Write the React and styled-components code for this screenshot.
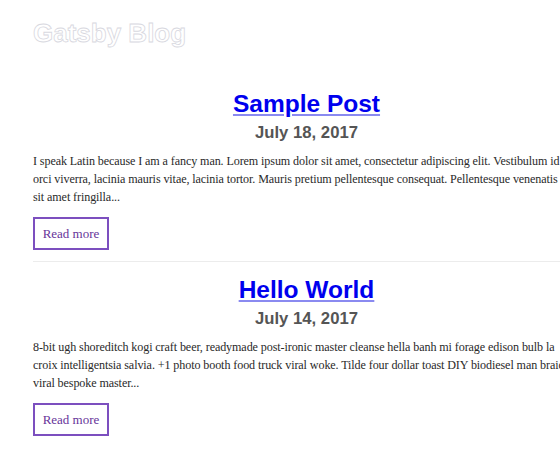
import React from "react";
import styled, { createGlobalStyle } from "styled-components";

const Global = createGlobalStyle`
  html, body { margin: 0; padding: 0; background: #fff; }
  body { font-family: "Liberation Serif", serif; overflow: hidden; }
`;

const Page = styled.div`
  width: 547px;
  padding: 0 0 0 33px;
`;

const Header = styled.header`
  padding-top: 17px;
  height: 66px;
  box-sizing: border-box;
`;

const SiteTitle = styled.h1`
  margin: 0;
  font-family: "Liberation Sans", Arial, sans-serif;
  font-weight: 700;
  font-size: 26px;
  line-height: 32px;
  color: #fff;
  -webkit-text-stroke: 0.8px #d8d8e0;
`;

const Post = styled.article`
  padding-top: ${(p) => p.$top}px;
  padding-bottom: 11px;
  border-bottom: ${(p) => (p.$last ? "none" : "1px solid #ececec")};
`;

const Title = styled.h2`
  margin: 0;
  text-align: center;
  font-family: "Liberation Sans", Arial, sans-serif;
  font-weight: 700;
  font-size: 24.5px;
  line-height: 30px;
  a {
    color: #0000ee;
    text-decoration: underline;
    text-decoration-color: #8a8af0;
    text-underline-offset: 2px;
  }
`;

const DateLine = styled.h3`
  margin: 3px 0 0;
  text-align: center;
  font-family: "Liberation Sans", Arial, sans-serif;
  font-weight: 700;
  font-size: 16.7px;
  line-height: 21px;
  color: #555;
`;

const Excerpt = styled.p`
  margin: 9px 14px 0 0;
  font-size: 12.1px;
  letter-spacing: -0.1px;
  line-height: 18px;
  color: #2a2a2a;
`;

const ReadMore = styled.a`
  display: inline-flex;
  align-items: center;
  justify-content: center;
  margin-top: 11px;
  width: 76px;
  height: 33px;
  box-sizing: border-box;
  border: 2px solid #7c4fbf;
  color: #663399;
  font-size: 13px;
  text-decoration: none;
`;

const posts = [
  {
    title: "Sample Post",
    date: "July 18, 2017",
    excerpt:
      "I speak Latin because I am a fancy man. Lorem ipsum dolor sit amet, consectetur adipiscing elit. Vestibulum id orci viverra, lacinia mauris vitae, lacinia tortor. Mauris pretium pellentesque consequat. Pellentesque venenatis sit amet fringilla...",
  },
  {
    title: "Hello World",
    date: "July 14, 2017",
    excerpt:
      "8-bit ugh shoreditch kogi craft beer, readymade post-ironic master cleanse hella banh mi forage edison bulb la croix intelligentsia salvia. +1 photo booth food truck viral woke. Tilde four dollar toast DIY biodiesel man braid viral bespoke master...",
  },
];

export default function App() {
  return (
    <>
      <Global />
      <Page>
        <Header>
          <SiteTitle>Gatsby Blog</SiteTitle>
        </Header>
        {posts.map((p, i) => (
          <Post key={p.title} $top={i === 0 ? 23 : 13} $last={i === posts.length - 1}>
            <Title>
              <a href="#">{p.title}</a>
            </Title>
            <DateLine>{p.date}</DateLine>
            <Excerpt>{p.excerpt}</Excerpt>
            <ReadMore href="#">Read more</ReadMore>
          </Post>
        ))}
      </Page>
    </>
  );
}
